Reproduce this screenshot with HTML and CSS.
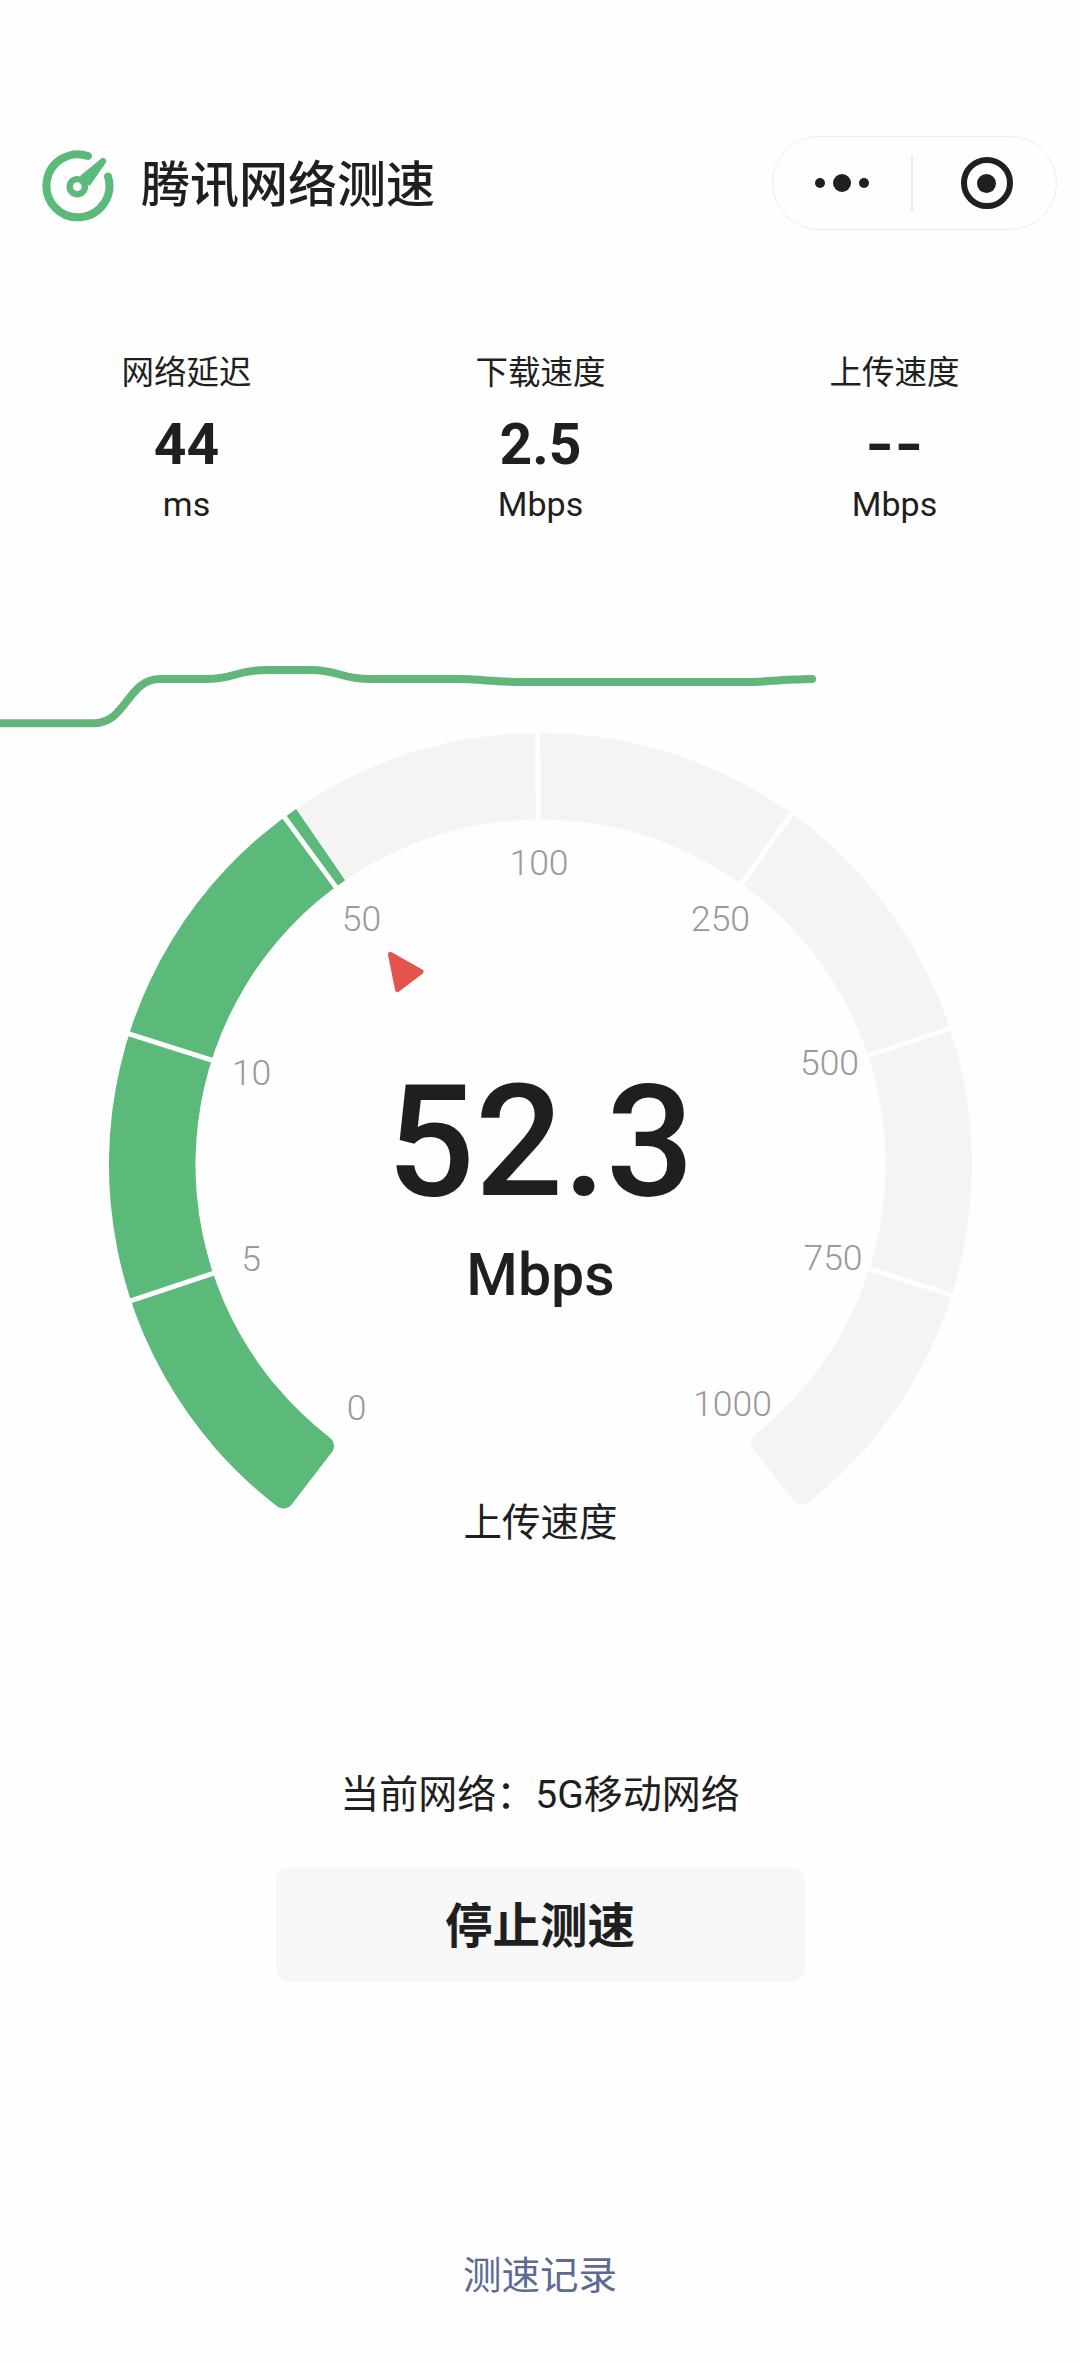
FILE: index.html
```html
<!DOCTYPE html>
<html lang="zh-CN">
<head>
<meta charset="utf-8">
<title>腾讯网络测速</title>
<link rel="stylesheet" href="styles.css">
</head>
<body>
<main class="page">
  <header class="header">
    <div class="brand">
      <svg class="logo" viewBox="0 0 76 76" aria-hidden="true">
        <path class="logo-ring" d="M48 8A31.5 31.5 0 1 0 68 28.5"/>
        <circle class="logo-hub" cx="37.3" cy="38.7" r="7.6"/>
        <path class="logo-needle" d="M40.5 28L62 10.5Q65 9.5 66 13Q66 14 65.5 14.5L49.5 37.5Z"/>
      </svg>
      <h1 class="title">腾讯网络测速</h1>
    </div>
    <div class="capsule">
      <div class="capsule-part capsule-more">
        <span class="dot"></span><span class="dot dot-big"></span><span class="dot"></span>
      </div>
      <span class="capsule-divider"></span>
      <div class="capsule-part capsule-record">
        <span class="target"><span class="target-core"></span></span>
      </div>
    </div>
  </header>

  <section class="stats">
    <div class="stat"><span class="stat-label">网络延迟</span><span class="stat-value">44</span><span class="stat-unit">ms</span></div>
    <div class="stat"><span class="stat-label">下载速度</span><span class="stat-value">2.5</span><span class="stat-unit">Mbps</span></div>
    <div class="stat"><span class="stat-label">上传速度</span><span class="stat-value stat-empty">--</span><span class="stat-unit">Mbps</span></div>
  </section>

  <svg class="gauge" viewBox="0 640 1080 920" role="img" aria-label="测速仪表盘">
    <path class="trend" d="M-5 723.3L93 723.3C127 723.3 127 679 160 679L207 679C235 679 235 670 267 670L310 670C340 670 340 679 370 679L455 679C480 679 495 682 524 682L745 682C770 682 785 679 812 679"/>
    <g transform="translate(540.5 1164.5) rotate(-0.4)">
      <path class="arc-track" d="M-218.4 279.9L-259.3 332.3A421.5 421.5 0 1 1 259.3 332.3L218.4 279.9A355 355 0 1 0 -218.4 279.9Z"/>
      <path class="arc-cap" d="M-218.4 279.9L-259.3 332.3A421.5 421.5 0 0 1 -322.9 270.9L-271.9 228.2A355 355 0 0 0 -218.4 279.9Z"/>
      <path class="arc-fill" d="M-260.4 226.4L-325.7 283.1A431.5 431.5 0 0 1 -241.9 -357.3L-193.4 -285.7A345 345 0 0 0 -260.4 226.4Z"/>
      <line class="sep" y1="-335" y2="-440" transform="rotate(-108)"/>
      <line class="sep" y1="-335" y2="-440" transform="rotate(-72)"/>
      <line class="sep" y1="-335" y2="-440" transform="rotate(-36)"/>
      <line class="sep" y1="-335" y2="-440"/>
      <line class="sep" y1="-335" y2="-440" transform="rotate(36)"/>
      <line class="sep" y1="-335" y2="-440" transform="rotate(72)"/>
      <line class="sep" y1="-335" y2="-440" transform="rotate(108)"/>
    </g>
    <text class="tick" x="356.5" y="1420">0</text>
    <text class="tick" x="251" y="1271">5</text>
    <text class="tick" x="251.5" y="1085">10</text>
    <text class="tick" x="361.5" y="931">50</text>
    <text class="tick" x="539" y="875">100</text>
    <text class="tick" x="720.5" y="931">250</text>
    <text class="tick" x="829.5" y="1075">500</text>
    <text class="tick" x="833" y="1270">750</text>
    <text class="tick" x="732.5" y="1416">1000</text>
    <polygon class="pointer" points="390.5,954.5 421,971.7 397.5,989.5"/>
    <text class="speed" x="540.5" y="1195">52.3</text>
    <text class="speed-unit" x="540.5" y="1294.5">Mbps</text>
    <text class="phase" x="540.5" y="1536">上传速度</text>
  </svg>

  <p class="network">当前网络&#xFF1A;5G移动网络</p>
  <button class="stop" type="button">停止测速</button>
  <a class="history">测速记录</a>
</main>
</body>
</html>
```
FILE: styles.css
```css
* { box-sizing: border-box; }
html, body { margin: 0; padding: 0; background: #fefefe; }
body {
  font-family: Roboto, "Noto Sans CJK SC", sans-serif;
  color: #1f1f1f;
}
.page {
  width: 1080px;
  height: 2363px;
  overflow: hidden;
  display: flex;
  flex-direction: column;
  align-items: center;
}

/* Header */
.header {
  width: 100%;
  margin-top: 136px;
  padding: 0 23px 0 40px;
  display: flex;
  align-items: center;
  justify-content: space-between;
}
.brand { display: flex; align-items: center; margin-top: 5px; }
.logo { width: 76px; height: 76px; margin-right: 25px; }
.logo-ring { fill: none; stroke: #5bb97a; stroke-width: 8; stroke-linecap: round; }
.logo-hub { fill: none; stroke: #5bb97a; stroke-width: 6.4; }
.logo-needle { fill: #5bb97a; stroke: #5bb97a; stroke-width: 1; stroke-linejoin: round; }
.title { margin: 0; font-size: 49px; line-height: 60px; font-weight: 500; }

.capsule {
  width: 285px;
  height: 94px;
  border: 1.5px solid #ededed;
  border-radius: 47px;
  display: flex;
  align-items: center;
}
.capsule-part { flex: 1; display: flex; align-items: center; justify-content: center; }
.capsule-more { gap: 8px; }
.capsule-record { padding-left: 5px; }
.capsule-divider { width: 1.5px; height: 57px; background: #ebebeb; }
.dot { width: 10px; height: 10px; border-radius: 50%; background: #1f1f1f; }
.dot-big { width: 18px; height: 18px; }
.target {
  width: 52px;
  height: 52px;
  border: 6.5px solid #1f1f1f;
  border-radius: 50%;
  display: flex;
  align-items: center;
  justify-content: center;
}
.target-core { width: 19px; height: 19px; border-radius: 50%; background: #1f1f1f; }

/* Stats */
.stats {
  margin: 121px 0 0 1px;
  display: grid;
  grid-template-columns: repeat(3, 354px);
}
.stat { display: flex; flex-direction: column; align-items: center; }
.stat-label { font-size: 32.5px; line-height: 44px; }
.stat-value { margin-top: 18px; font-size: 57px; line-height: 64px; font-weight: 700; }
.stat-empty { transform: scaleX(1.3); }
.stat-unit { margin-top: 5px; font-size: 34px; line-height: 44px; }

/* Gauge */
.gauge { width: 1080px; height: 920px; margin-top: 114px; flex: none; display: block; }
.trend { fill: none; stroke: #62b67a; stroke-width: 8; stroke-linecap: round; }
.arc-track { fill: #f4f4f4; stroke: #f4f4f4; stroke-width: 20; stroke-linejoin: round; }
.arc-cap { fill: #5bb97a; stroke: #5bb97a; stroke-width: 20; stroke-linejoin: round; }
.arc-fill { fill: #5bb97a; }
.sep { stroke: #fefefe; stroke-width: 5; }
.tick { font-size: 35.5px; font-weight: 300; fill: #999; text-anchor: middle; }
.pointer { fill: #e5534f; stroke: #e5534f; stroke-width: 5; stroke-linejoin: round; }
.speed { font-size: 155px; font-weight: 500; fill: #1f1f1f; text-anchor: middle; }
.speed-unit { font-size: 59px; font-weight: 500; fill: #1f1f1f; text-anchor: middle; }
.phase { font-size: 38.5px; fill: #1f1f1f; text-anchor: middle; }

/* Footer */
.network { margin: 210px 0 0; font-size: 39px; line-height: 50px; }
.stop {
  width: 529px;
  height: 115px;
  margin-top: 47px;
  border: 0;
  border-radius: 14px;
  background: #f7f7f7;
  color: #1f1f1f;
  font-family: inherit;
  font-size: 47.5px;
  line-height: 1;
  font-weight: 700;
  padding: 6px 0 0;
}
.history { margin-top: 269px; font-size: 38.5px; line-height: 50px; color: #5b6b93; }
```
